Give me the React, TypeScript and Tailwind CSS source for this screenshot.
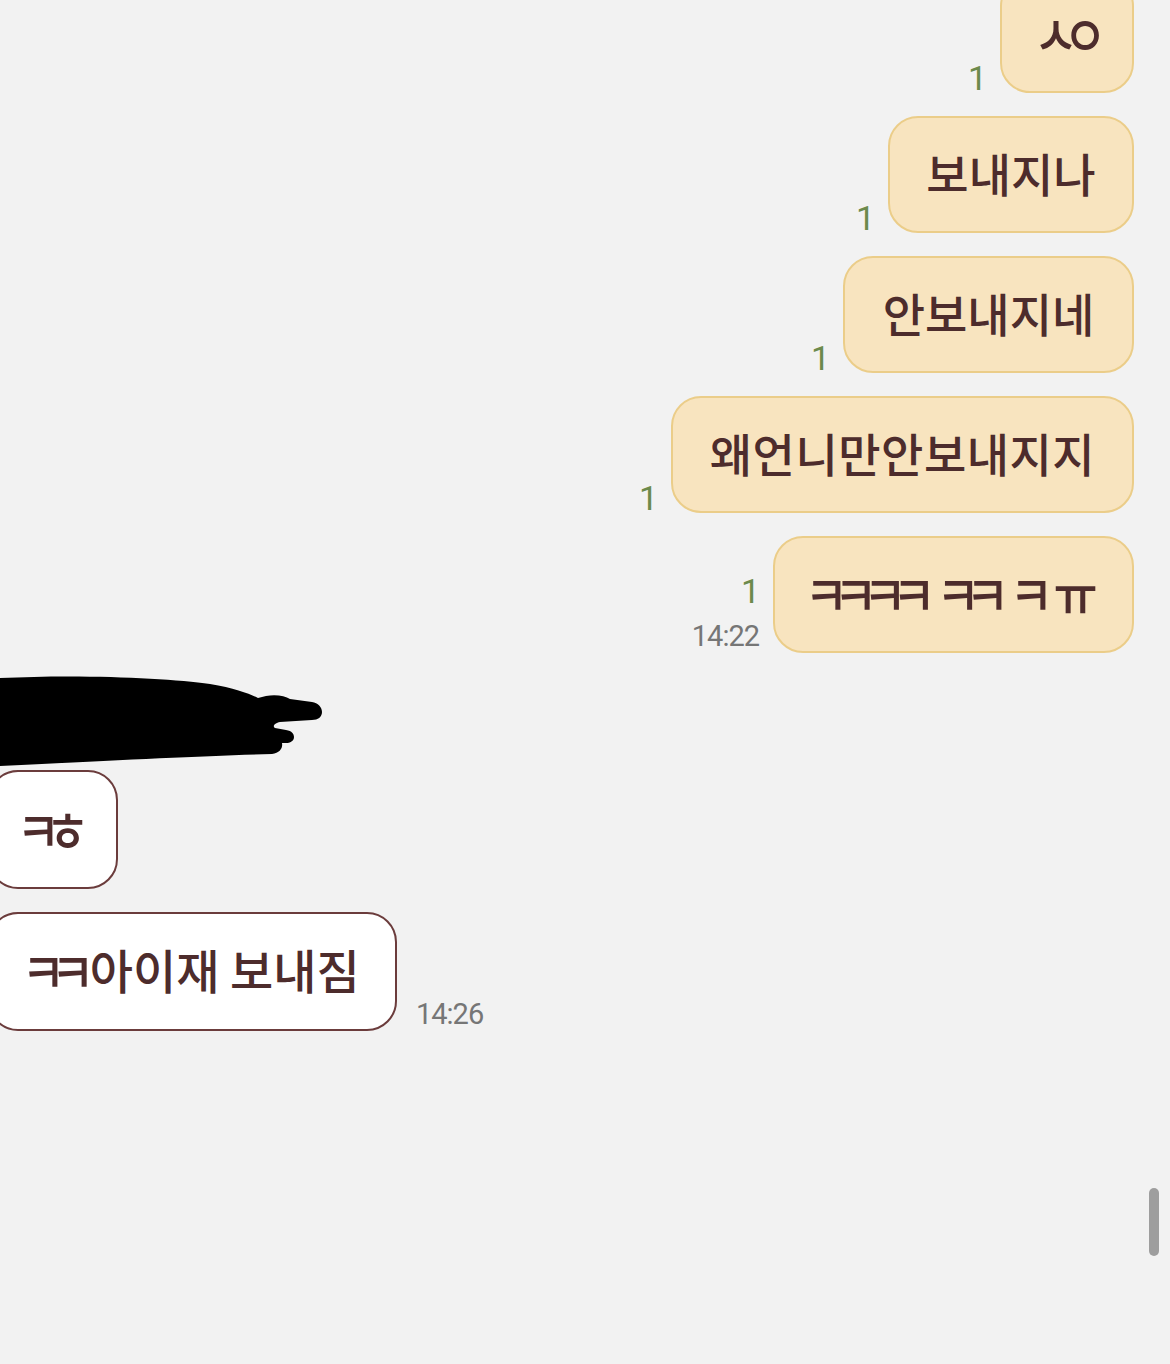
import React from "react";

const KR = { fontFamily: '"Noto Sans CJK KR", "Noto Sans", sans-serif' };
const NUM = { fontFamily: 'Roboto, "Noto Sans", sans-serif' };

function Jamo({ groups }: { groups: string[] }) {
  return (
    <span className="flex items-center gap-[15px]">
      {groups.map((g, i) => (
        <span
          key={i}
          className="inline-block text-[48px] leading-none tracking-[-15px] scale-y-[1.15] font-medium"
        >
          {g}
        </span>
      ))}
    </span>
  );
}

function Mine({
  children,
  w,
  time,
}: {
  children: React.ReactNode;
  w: string;
  time?: string;
}) {
  return (
    <div className="flex justify-end items-end gap-[14px]">
      <div className="flex flex-col items-end" style={NUM}>
        <span
          className={`text-[34px] leading-[30px] text-[#6c8a4c] tracking-[-1px] ${time ? "pb-[13px]" : ""}`}
        >
          1
        </span>
        {time && (
          <span className="text-[29px] leading-[34px] text-[#767676] tracking-[-1px]">{time}</span>
        )}
      </div>
      <div
        className={`${w} h-[117px] shrink-0 rounded-[30px] border-2 border-[#ebcd89] bg-[#f8e4bf] flex items-center justify-center text-[#4d2c2c] whitespace-nowrap pb-[5px]`}
        style={KR}
      >
        {children}
      </div>
    </div>
  );
}

export default function App() {
  return (
    <div className="relative w-[1170px] h-[1364px] overflow-hidden bg-[#f2f2f2]">
      <div className="flex flex-col gap-[23px] pr-[36px] mt-[-24px]">
        <Mine w="w-[134px]">
          <span className="pr-[8px]">
            <Jamo groups={["ㅅㅇ"]} />
          </span>
        </Mine>
        <Mine w="w-[246px]">
          <span className="text-[46px] font-medium">보내지나</span>
        </Mine>
        <Mine w="w-[291px]">
          <span className="text-[46px] font-medium">안보내지네</span>
        </Mine>
        <Mine w="w-[463px]">
          <span className="text-[46px] font-medium tracking-[0.5px]">왜언니만안보내지지</span>
        </Mine>
        <Mine w="w-[361px]" time="14:22">
          <span className="pr-[20px]">
            <Jamo groups={["ㅋㅋㅋㅋ", "ㅋㅋ", "ㅋ", "ㅠ"]} />
          </span>
        </Mine>
      </div>

      <svg className="block mt-[17px]" width="330" height="100" viewBox="0 0 330 100">
        <path
          d="M0,8 C80,4 170,8 210,14 C235,18 250,24 258,28 L266,26 C276,24 285,26 290,29 L312,32 C318,33 322,37 322,42 C322,47 318,50 312,50 L280,52 C275,53 272,56 275,58 L286,60 C292,61 294,64 294,67 C294,71 290,73 286,73 L282,73 C283,78 280,83 272,84 C200,86 120,90 0,96 Z"
          fill="#000"
        />
      </svg>

      <div className="flex flex-col gap-[23px] ml-[-12px]">
        <div
          className="w-[130px] h-[119px] rounded-[30px] border-[2.5px] border-[#6b3c3c] bg-white flex items-center justify-center text-[#4d2c2c] whitespace-nowrap pb-[3px]"
          style={KR}
        >
          <span className="pr-[15px]">
            <Jamo groups={["ㅋㅎ"]} />
          </span>
        </div>
        <div className="flex items-end gap-[19px]">
          <div
            className="w-[409px] h-[119px] rounded-[30px] border-[2.5px] border-[#6b3c3c] bg-white flex items-center justify-center text-[#4d2c2c] whitespace-nowrap pb-[5px]"
            style={KR}
          >
            <span className="flex items-center pr-[4px]">
              <span className="inline-block text-[48px] leading-none tracking-[-15px] scale-y-[1.15] font-medium">
                ㅋㅋ
              </span>
              <span className="text-[47px] font-medium pl-[10px]">아이재 보내짐</span>
            </span>
          </div>
          <span
            className="text-[29px] leading-[34px] text-[#767676] tracking-[-1px]"
            style={NUM}
          >
            14:26
          </span>
        </div>
      </div>

      <div className="absolute left-[1149px] top-[1188px] w-[10px] h-[68px] rounded-full bg-[#9e9e9e]" />
    </div>
  );
}
